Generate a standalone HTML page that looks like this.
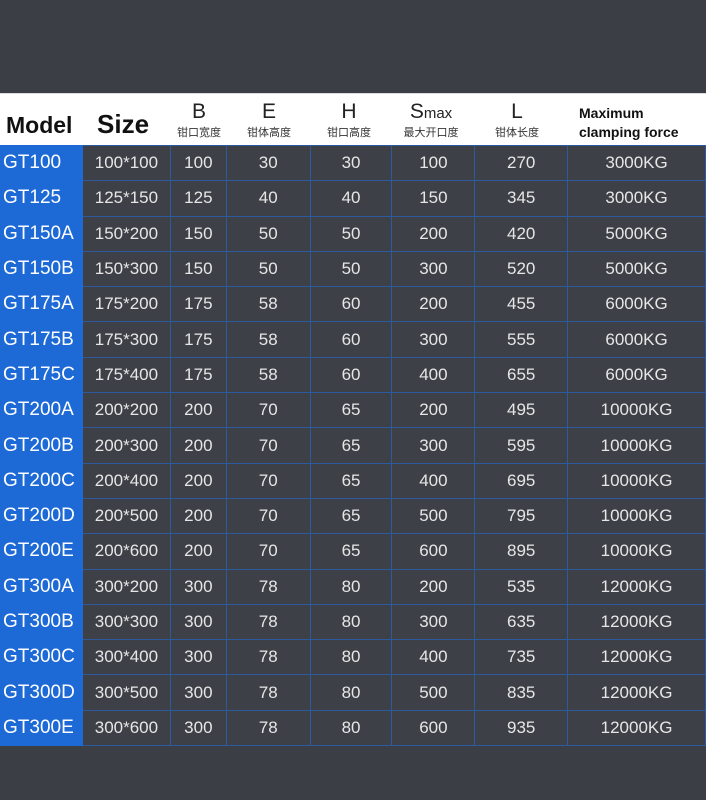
<!DOCTYPE html>
<html><head><meta charset="utf-8"><style>
body{margin:0;width:706px;height:800px;background:#3b3e45;overflow:hidden;font-family:"Liberation Sans","Noto Sans CJK SC",sans-serif}
.hdr{position:absolute;top:93px;left:0;width:706px;height:52px;background:#fff;border-top:1px solid #d8dbe0}
.h{position:absolute;text-align:center;color:#111}
.big{font-size:23px;font-weight:bold;top:18px}
.let{font-size:21px;top:6px;width:100%;color:#222}
.cn{font-size:11px;top:30px;width:100%;color:#333}
table{position:absolute;top:145px;left:0;border-collapse:collapse;table-layout:fixed}
td{height:34.3px;border:1px solid #2d5a9e;color:#e6e6e6;font-size:17px;line-height:20px;text-align:center;vertical-align:middle;padding:0;background:#3d4047}
td.m{background:#1d6ad6;color:#fff;font-size:19px;border-color:#1d6ad6;text-align:left;padding-left:2px}
</style></head><body>
<div class="hdr">
<div class="h big" style="left:6px;text-align:left">Model</div>
<div class="h big" style="left:97px;font-size:26px;top:15px">Size</div>
<div class="h" style="left:170px;width:58px"><div class="h let">B</div><div class="h cn">钳口宽度</div></div>
<div class="h" style="left:240px;width:58px"><div class="h let">E</div><div class="h cn">钳体高度</div></div>
<div class="h" style="left:320px;width:58px"><div class="h let">H</div><div class="h cn">钳口高度</div></div>
<div class="h" style="left:396px;width:70px"><div class="h let">S<span style="font-size:15px">max</span></div><div class="h cn">最大开口度</div></div>
<div class="h" style="left:488px;width:58px"><div class="h let">L</div><div class="h cn">钳体长度</div></div>
<div class="h" style="left:579px;top:10px;text-align:left;font-size:14px;font-weight:bold;line-height:19px">Maximum<br>clamping force</div>
</div>
<table>
<colgroup><col style="width:82px"><col style="width:88px"><col style="width:56px"><col style="width:84px"><col style="width:82px"><col style="width:83px"><col style="width:93px"><col style="width:138px"></colgroup>
<tr><td class="m">GT100</td><td>100*100</td><td>100</td><td>30</td><td>30</td><td>100</td><td>270</td><td>3000KG</td></tr>
<tr><td class="m">GT125</td><td>125*150</td><td>125</td><td>40</td><td>40</td><td>150</td><td>345</td><td>3000KG</td></tr>
<tr><td class="m">GT150A</td><td>150*200</td><td>150</td><td>50</td><td>50</td><td>200</td><td>420</td><td>5000KG</td></tr>
<tr><td class="m">GT150B</td><td>150*300</td><td>150</td><td>50</td><td>50</td><td>300</td><td>520</td><td>5000KG</td></tr>
<tr><td class="m">GT175A</td><td>175*200</td><td>175</td><td>58</td><td>60</td><td>200</td><td>455</td><td>6000KG</td></tr>
<tr><td class="m">GT175B</td><td>175*300</td><td>175</td><td>58</td><td>60</td><td>300</td><td>555</td><td>6000KG</td></tr>
<tr><td class="m">GT175C</td><td>175*400</td><td>175</td><td>58</td><td>60</td><td>400</td><td>655</td><td>6000KG</td></tr>
<tr><td class="m">GT200A</td><td>200*200</td><td>200</td><td>70</td><td>65</td><td>200</td><td>495</td><td>10000KG</td></tr>
<tr><td class="m">GT200B</td><td>200*300</td><td>200</td><td>70</td><td>65</td><td>300</td><td>595</td><td>10000KG</td></tr>
<tr><td class="m">GT200C</td><td>200*400</td><td>200</td><td>70</td><td>65</td><td>400</td><td>695</td><td>10000KG</td></tr>
<tr><td class="m">GT200D</td><td>200*500</td><td>200</td><td>70</td><td>65</td><td>500</td><td>795</td><td>10000KG</td></tr>
<tr><td class="m">GT200E</td><td>200*600</td><td>200</td><td>70</td><td>65</td><td>600</td><td>895</td><td>10000KG</td></tr>
<tr><td class="m">GT300A</td><td>300*200</td><td>300</td><td>78</td><td>80</td><td>200</td><td>535</td><td>12000KG</td></tr>
<tr><td class="m">GT300B</td><td>300*300</td><td>300</td><td>78</td><td>80</td><td>300</td><td>635</td><td>12000KG</td></tr>
<tr><td class="m">GT300C</td><td>300*400</td><td>300</td><td>78</td><td>80</td><td>400</td><td>735</td><td>12000KG</td></tr>
<tr><td class="m">GT300D</td><td>300*500</td><td>300</td><td>78</td><td>80</td><td>500</td><td>835</td><td>12000KG</td></tr>
<tr><td class="m">GT300E</td><td>300*600</td><td>300</td><td>78</td><td>80</td><td>600</td><td>935</td><td>12000KG</td></tr>
</table>
</body></html>
